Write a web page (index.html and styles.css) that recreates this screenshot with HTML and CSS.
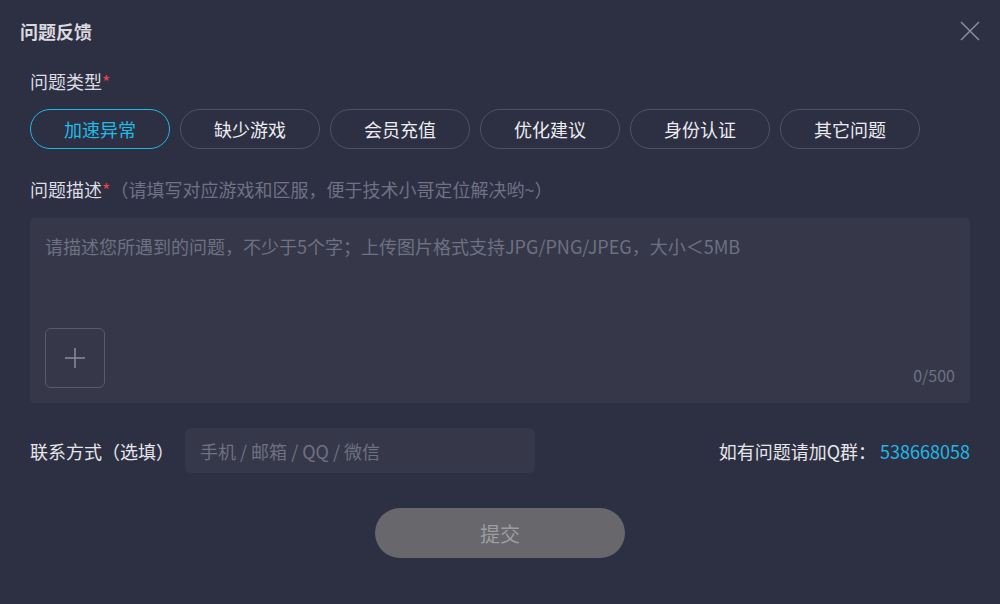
FILE: index.html
```html
<!DOCTYPE html>
<html lang="zh-CN">
<head>
<meta charset="utf-8">
<link rel="stylesheet" href="styles.css">
</head>
<body>
<div class="dialog">
  <div class="header">
    <div class="title">问题反馈</div>
    <svg class="close" width="20" height="20" viewBox="0 0 20 20"><path d="M1 1L19 19M19 1L1 19" stroke="#8c8d9b" stroke-width="1.5" fill="none"/></svg>
  </div>
  <div class="content">
    <div class="label type-label">问题类型<span class="star">*</span></div>
    <div class="types">
      <div class="type active">加速异常</div>
      <div class="type">缺少游戏</div>
      <div class="type">会员充值</div>
      <div class="type">优化建议</div>
      <div class="type">身份认证</div>
      <div class="type">其它问题</div>
    </div>
    <div class="label desc-label">问题描述<span class="star">*</span><span class="hint">（请填写对应游戏和区服，便于技术小哥定位解决哟~）</span></div>
    <div class="textarea">
      <div class="placeholder">请描述您所遇到的问题，不少于5个字；上传图片格式支持JPG/PNG/JPEG，大小＜5MB</div>
      <div class="ta-bottom">
        <div class="upload"><svg width="22" height="22" viewBox="0 0 22 22"><path d="M11 1V21M1 11H21" stroke="#8a8b9a" stroke-width="1.5"/></svg></div>
        <div class="count">0/500</div>
      </div>
    </div>
    <div class="contact">
      <div class="contact-label">联系方式（选填）</div>
      <div class="input">手机 / 邮箱 / QQ / 微信</div>
      <div class="qq">如有问题请加Q群：<span class="qq-num">538668058</span></div>
    </div>
    <div class="submit-row"><div class="submit">提交</div></div>
  </div>
</div>
</body>
</html>
```
FILE: styles.css
```css
* { box-sizing: border-box; }
html, body { margin: 0; padding: 0; }
body {
  width: 1000px;
  height: 604px;
  background: #2d2f43;
  font-family: "Microsoft YaHei", "Noto Sans CJK SC", "Noto Sans", sans-serif;
  color: #e6e6ea;
  overflow: hidden;
}
.dialog { padding: 0 30px 0 20px; }
.header {
  height: 62px;
  display: flex;
  align-items: center;
  justify-content: space-between;
}
.title { font-size: 18px; font-weight: bold; color: #d9d9de; }
.close { margin-right: -10px; }
.content { padding-left: 10px; }
.label { font-size: 18px; line-height: 24px; color: #dcdce2; }
.type-label { margin-top: 7px; }
.star { color: #e8434c; }
.hint { color: #6f7184; }
.types { display: flex; gap: 10px; margin-top: 16px; }
.type {
  width: 140px; height: 40px;
  border: 1px solid #4f5164;
  border-radius: 20px;
  display: flex; align-items: center; justify-content: center;
  font-size: 18px; color: #ececf0;
}
.type.active { border-color: #1fb8e4; color: #21bbe8; }
.desc-label { margin-top: 28px; }
.textarea {
  margin-top: 17px;
  width: 940px; height: 185px;
  background: #363849;
  border-radius: 4px;
  padding: 15px;
  display: flex; flex-direction: column; justify-content: space-between;
}
.placeholder { font-size: 18px; line-height: 26px; color: #6e7083; }
.ta-bottom { display: flex; justify-content: space-between; align-items: flex-end; }
.upload {
  width: 60px; height: 60px;
  border: 1px solid #585a6d;
  border-radius: 6px;
  display: flex; align-items: center; justify-content: center;
}
.count { font-size: 16px; color: #6e7083; line-height: 18px; margin-bottom: 4px; }
.contact { display: flex; align-items: center; margin-top: 25px; height: 45px; }
.contact-label { font-size: 18px; color: #e6e6ea; width: 155px; }
.input {
  width: 350px; height: 45px;
  background: #363849;
  border-radius: 6px;
  padding-left: 15px;
  display: flex; align-items: center;
  font-size: 18px; color: #6e7083;
}
.qq { margin-left: auto; font-size: 18px; color: #e6e6ea; }
.qq-num { color: #22b8e6; margin-left: 4px; }
.submit-row { display: flex; justify-content: center; margin-top: 35px; }
.submit {
  width: 250px; height: 50px;
  border-radius: 25px;
  background: #67676c;
  display: flex; align-items: center; justify-content: center;
  font-size: 20px; color: #9d9da3;
}
```
